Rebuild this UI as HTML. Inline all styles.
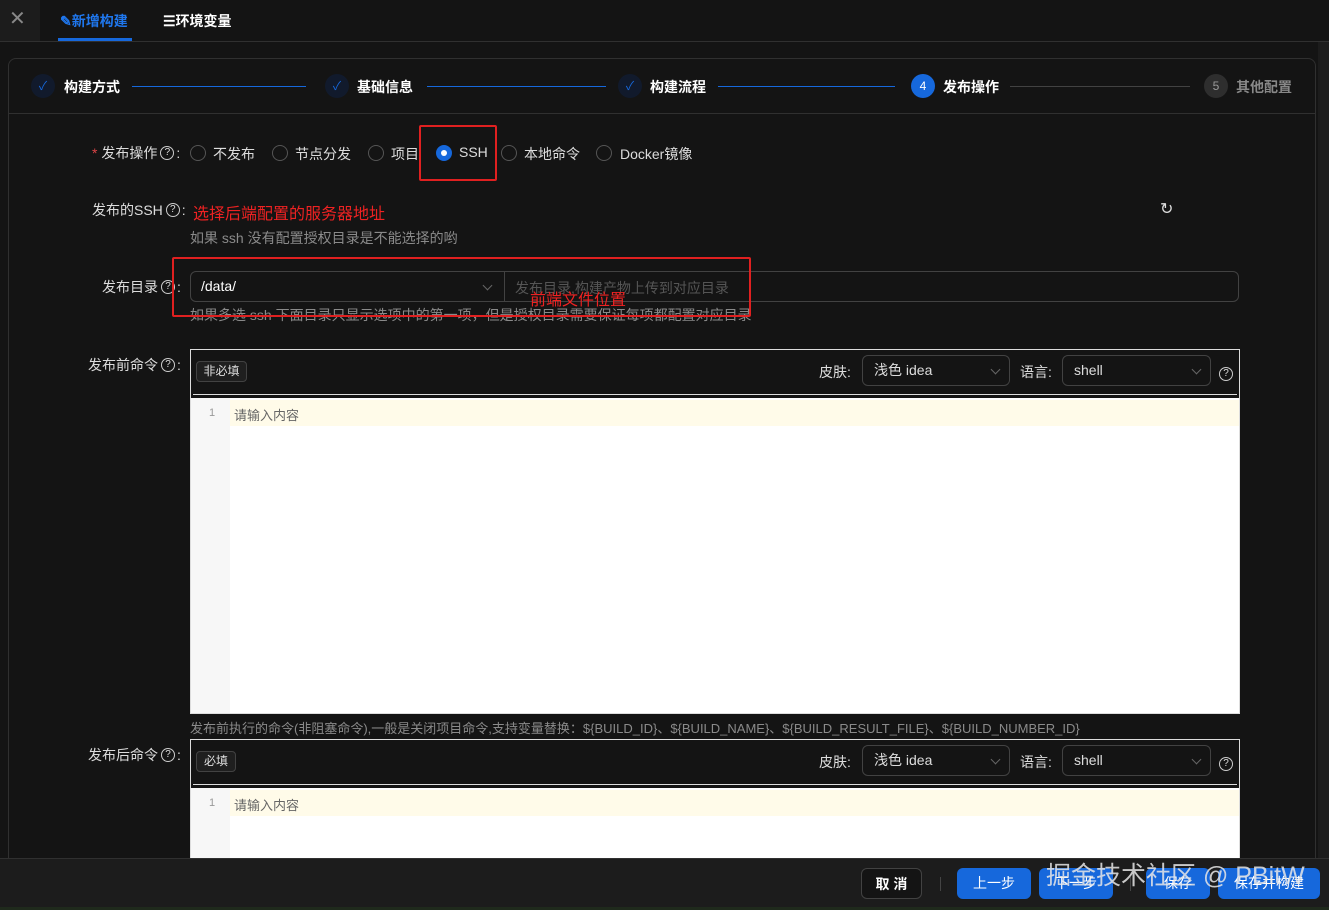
<!DOCTYPE html>
<html><head><meta charset="utf-8"><style>
*{box-sizing:border-box;margin:0;padding:0}
body{width:1329px;height:910px;background:#141414;font-family:"Liberation Sans","Noto Sans CJK SC",sans-serif;color:rgba(255,255,255,.85);font-size:14px;position:relative;overflow:hidden}
.a{position:absolute;white-space:nowrap}
.lb{display:flex;align-items:center;height:20px}
.q{display:inline-block;width:14px;height:14px;border:1px solid #ccc;border-radius:50%;font-size:10px;line-height:12px;text-align:center;margin:0 2px 0 3px;flex:none}
.rd{position:absolute;width:16px;height:16px;border:1px solid #555;border-radius:50%}
.step{position:absolute;width:24px;height:24px;border-radius:50%;text-align:center;line-height:24px;font-size:12px;top:74px}
.sel{position:absolute;border:1px solid #424242;border-radius:6px;height:31px;padding-left:11px;line-height:29px}
.chev{position:absolute;right:10px;top:10px;width:7px;height:7px;border-right:1px solid #666;border-bottom:1px solid #666;transform:rotate(45deg)}
.btn{position:absolute;top:868px;height:31px;border-radius:6px;text-align:center;line-height:31px;font-size:14px;color:#fff}
.blue{background:#1668dc}
</style></head><body>
<div class="a" style="left:0;top:0;width:40px;height:41px;background:#1c1c1c"></div>
<div class="a" style="left:9px;top:6px;font-size:20px;color:#888">✕</div>
<div class="a" style="left:60px;top:11px;color:#1f77ee;font-weight:bold">✎新增构建</div>
<div class="a" style="left:58px;top:38px;width:74px;height:3px;background:#1668dc"></div>
<div class="a" style="left:163px;top:11px;color:#fff;font-weight:bold">☰环境变量</div>
<div class="a" style="left:0;top:41px;width:1329px;height:1px;background:#303030"></div>
<div class="a" style="left:1318px;top:42px;width:11px;height:816px;background:#1c1c1c"></div>
<div class="a" style="left:8px;top:58px;width:1308px;height:820px;border:1px solid #303030;border-radius:8px"></div>
<div class="a" style="left:9px;top:113px;width:1306px;height:1px;background:#303030"></div>
<div class="step" style="left:31px;background:#111a2c;color:#1668dc">✓</div>
<div class="a" style="left:64px;top:77px;font-weight:bold;color:#fff">构建方式</div>
<div class="a" style="left:132px;top:86px;width:174px;height:1px;background:#1668dc"></div>
<div class="step" style="left:325px;background:#111a2c;color:#1668dc">✓</div>
<div class="a" style="left:357px;top:77px;font-weight:bold;color:#fff">基础信息</div>
<div class="a" style="left:427px;top:86px;width:179px;height:1px;background:#1668dc"></div>
<div class="step" style="left:618px;background:#111a2c;color:#1668dc">✓</div>
<div class="a" style="left:650px;top:77px;font-weight:bold;color:#fff">构建流程</div>
<div class="a" style="left:718px;top:86px;width:177px;height:1px;background:#1668dc"></div>
<div class="step" style="left:911px;background:#1668dc;color:#fff">4</div>
<div class="a" style="left:943px;top:77px;font-weight:bold;color:#fff">发布操作</div>
<div class="a" style="left:1010px;top:86px;width:180px;height:1px;background:#424242"></div>
<div class="step" style="left:1204px;background:#2e2e2e;color:#999">5</div>
<div class="a" style="left:1236px;top:77px;font-weight:bold;color:#888">其他配置</div>
<div class="a lb" style="left:92px;top:143px"><span style="color:#dc4446">*&nbsp;</span>发布操作<span class="q">?</span>:</div>
<div class="rd" style="left:190px;top:145px"></div><div class="a" style="left:213px;top:144px">不发布</div>
<div class="rd" style="left:272px;top:145px"></div><div class="a" style="left:295px;top:144px">节点分发</div>
<div class="rd" style="left:368px;top:145px"></div><div class="a" style="left:391px;top:144px">项目</div>
<div class="rd" style="left:436px;top:145px;background:#1668dc;border-color:#1668dc"><div style="width:6px;height:6px;background:#fff;border-radius:50%;margin:4px"></div></div><div class="a" style="left:459px;top:144px">SSH</div>
<div class="rd" style="left:501px;top:145px"></div><div class="a" style="left:524px;top:144px">本地命令</div>
<div class="rd" style="left:596px;top:145px"></div><div class="a" style="left:620px;top:144px">Docker镜像</div>
<div class="a" style="left:419px;top:125px;width:78px;height:56px;border:2px solid #e02020;border-radius:2px"></div>
<div class="a lb" style="left:92px;top:200px">发布的SSH<span class="q">?</span>:</div>
<div class="a" style="left:193px;top:200px;color:#ee2222;font-size:16px">选择后端配置的服务器地址</div>
<div class="a" style="left:1160px;top:199px;font-size:16px;color:#ddd">↻</div>
<div class="a" style="left:190px;top:228px;color:#8a8a8a">如果 ssh 没有配置授权目录是不能选择的哟</div>
<div class="a lb" style="left:102px;top:277px">发布目录<span class="q">?</span>:</div>
<div class="a" style="left:190px;top:271px;width:1049px;height:31px;border:1px solid #424242;border-radius:6px"></div>
<div class="a" style="left:504px;top:272px;width:1px;height:29px;background:#424242"></div>
<div class="a" style="left:201px;top:278px;color:#fff">/data/</div>
<div class="a" style="left:484px;top:282px;width:7px;height:7px;border-right:1px solid #666;border-bottom:1px solid #666;transform:rotate(45deg)"></div>
<div class="a" style="left:515px;top:278px;color:#555">发布目录,构建产物上传到对应目录</div>
<div class="a" style="left:190px;top:305px;color:#8a8a8a">如果多选 ssh 下面目录只显示选项中的第一项，但是授权目录需要保证每项都配置对应目录</div>
<div class="a" style="left:530px;top:286px;color:#ee2222;font-size:16px">前端文件位置</div>
<div class="a" style="left:172px;top:257px;width:579px;height:60px;border:2px solid #e02020;border-radius:2px"></div>
<div class="a lb" style="left:88px;top:355px">发布前命令<span class="q">?</span>:</div>
<div class="a" style="left:190px;top:349px;width:1050px;height:365px;border:1px solid #ddd"></div>
<div class="a" style="left:196px;top:361px;width:51px;height:21px;border:1px solid #424242;border-radius:4px;background:#1f1f1f;font-size:12px;line-height:19px;text-align:center">非必填</div>
<div class="a" style="left:819px;top:362px">皮肤:</div>
<div class="sel" style="left:862px;top:355px;width:148px">浅色 idea<i class="chev"></i></div>
<div class="a" style="left:1020px;top:362px">语言:</div>
<div class="sel" style="left:1062px;top:355px;width:149px">shell<i class="chev"></i></div>
<div class="a" style="left:1219px;top:363px"><span class="q" style="margin:0">?</span></div>
<div class="a" style="left:193px;top:394px;width:1044px;height:1px;background:#ddd"></div>
<div class="a" style="left:191px;top:398px;width:1048px;height:315px;background:#fff"></div>
<div class="a" style="left:191px;top:398px;width:39px;height:315px;background:#f7f7f7"></div>
<div class="a" style="left:230px;top:400px;width:1009px;height:26px;background:#fffbe9"></div>
<div class="a" style="left:209px;top:407px;font-size:11px;color:#999">1</div>
<div class="a" style="left:234px;top:405px;font-size:13px;color:#666">请输入内容</div>
<div class="a" style="left:190px;top:718px;color:#8a8a8a;font-size:13px">发布前执行的命令(非阻塞命令),一般是关闭项目命令,支持变量替换：${BUILD_ID}、${BUILD_NAME}、${BUILD_RESULT_FILE}、${BUILD_NUMBER_ID}</div>
<div class="a lb" style="left:88px;top:745px">发布后命令<span class="q">?</span>:</div>
<div class="a" style="left:190px;top:739px;width:1050px;height:140px;border:1px solid #ddd"></div>
<div class="a" style="left:196px;top:751px;width:40px;height:21px;border:1px solid #424242;border-radius:4px;background:#1f1f1f;font-size:12px;line-height:19px;text-align:center">必填</div>
<div class="a" style="left:819px;top:752px">皮肤:</div>
<div class="sel" style="left:862px;top:745px;width:148px">浅色 idea<i class="chev"></i></div>
<div class="a" style="left:1020px;top:752px">语言:</div>
<div class="sel" style="left:1062px;top:745px;width:149px">shell<i class="chev"></i></div>
<div class="a" style="left:1219px;top:753px"><span class="q" style="margin:0">?</span></div>
<div class="a" style="left:193px;top:784px;width:1044px;height:1px;background:#ddd"></div>
<div class="a" style="left:191px;top:788px;width:1048px;height:80px;background:#fff"></div>
<div class="a" style="left:191px;top:788px;width:39px;height:80px;background:#f7f7f7"></div>
<div class="a" style="left:230px;top:790px;width:1009px;height:26px;background:#fffbe9"></div>
<div class="a" style="left:209px;top:797px;font-size:11px;color:#999">1</div>
<div class="a" style="left:234px;top:795px;font-size:13px;color:#666">请输入内容</div>
<div class="a" style="left:0;top:858px;width:1329px;height:52px;background:#1c1c1c;border-top:1px solid #303030"></div>
<div class="a" style="left:0;top:907px;width:1329px;height:3px;background:#1f2a1c"></div>
<div class="btn" style="left:861px;width:61px;border:1px solid #424242;background:#141414;font-weight:bold">取 消</div>
<div class="a" style="left:940px;top:877px;width:1px;height:14px;background:#444"></div>
<div class="btn blue" style="left:957px;width:74px">上一步</div>
<div class="btn blue" style="left:1039px;width:74px">下一步</div>
<div class="a" style="left:1130px;top:877px;width:1px;height:14px;background:#444"></div>
<div class="btn blue" style="left:1146px;width:64px">保存</div>
<div class="btn blue" style="left:1218px;width:102px">保存并构建</div>
<div class="a" style="left:1046px;top:856px;font-size:25px;color:rgba(230,230,230,.85)">掘金技术社区 @ PBitW</div>
</body></html>
